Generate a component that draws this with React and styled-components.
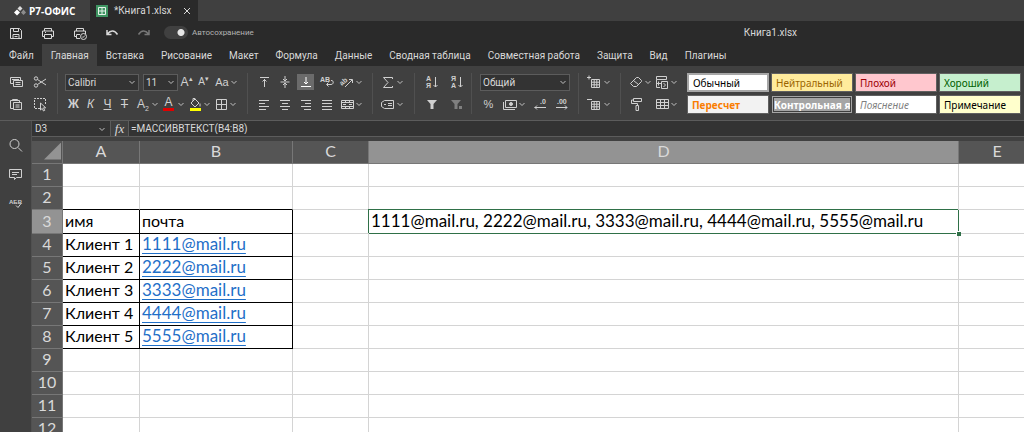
import React from 'react';
import styled, { createGlobalStyle, css } from 'styled-components';

const GlobalStyle = createGlobalStyle`
    * {
        box-sizing: border-box;
    }
    body {
        margin: 0;
        overflow: hidden;
        background: #404040;
        color: #d9d9d9;
        font-family: Roboto, "Liberation Sans", sans-serif;
        font-size: 10px;
    }
    button, input, select {
        margin: 0;
        padding: 0;
        border: 0;
        background: none;
        color: inherit;
        font: inherit;
    }
`;

const App = () => (
    <Page>
        <GlobalStyle />
        <WindowBar>
            <Brand>
                <Icon name="logo" w={12} h={10} />
                Р7-ОФИС
            </Brand>
            <FileTab>
                <Icon name="sheet" w={12} h={12} />
                <FileName>*Книга1.xlsx</FileName>
                <CloseButton aria-label="Закрыть">
                    <Icon name="close" w={8} h={8} />
                </CloseButton>
            </FileTab>
        </WindowBar>
        <QuickBar>
            <QuickButton aria-label="Сохранить"><Icon name="save" /></QuickButton>
            <QuickButton aria-label="Печать"><Icon name="print" /></QuickButton>
            <QuickButton aria-label="Быстрая печать"><Icon name="quickPrint" /></QuickButton>
            <QuickButton aria-label="Отменить"><Icon name="undo" /></QuickButton>
            <QuickButton aria-label="Повторить" $dim><Icon name="redo" /></QuickButton>
            <AutoSave>
                <Switch type="checkbox" role="switch" defaultChecked />
                Автосохранение
            </AutoSave>
            <DocTitle>Книга1.xlsx</DocTitle>
        </QuickBar>
        <Tabs>
            {tabs.map((tab) => (
                <Tab key={tab} $active={tab === 'Главная'}>{tab}</Tab>
            ))}
        </Tabs>
        <Ribbon />
        <Workspace>
            <Sidebar>
                <SideButton aria-label="Поиск"><Icon name="search" /></SideButton>
                <SideButton aria-label="Комментарии"><Icon name="comment" /></SideButton>
                <SideButton aria-label="Проверка орфографии"><Icon name="spell" /></SideButton>
            </Sidebar>
            <Editor>
                <FormulaBar>
                    <NameBox>
                        <NameInput aria-label="Имя ячейки" defaultValue="D3" />
                        <Chevron />
                    </NameBox>
                    <FxButton>fx</FxButton>
                    <FormulaInput aria-label="Формула" defaultValue="=МАССИВВТЕКСТ(B4:B8)" />
                </FormulaBar>
                <Sheet />
            </Editor>
        </Workspace>
    </Page>
);

const tabs = [
    'Файл', 'Главная', 'Вставка', 'Рисование', 'Макет', 'Формула', 'Данные',
    'Сводная таблица', 'Совместная работа', 'Защита', 'Вид', 'Плагины',
];

const Page = styled.div`
    display: flex;
    flex-direction: column;
    height: 100vh;
    overflow: hidden;
`;

const WindowBar = styled.header`
    display: flex;
    flex: none;
    height: 21px;
    background: #404040;
`;

const Brand = styled.div`
    display: flex;
    align-items: center;
    gap: 3px;
    width: 90px;
    padding-left: 14px;
    color: #fff;
    font-family: "Open Sans", sans-serif;
    font-size: 10px;
    font-weight: 700;
`;

const FileTab = styled.div`
    display: flex;
    align-items: center;
    width: 108px;
    padding: 0 6px;
    background: #2a2a2a;
`;

const FileName = styled.span`
    flex: 1;
    padding-left: 6px;
`;

const CloseButton = styled.button`
    display: flex;
    padding: 1px;
`;

const QuickBar = styled.div`
    display: flex;
    flex: none;
    align-items: center;
    height: 23px;
    background: #2a2a2a;
`;

const QuickButton = styled.button`
    display: flex;
    justify-content: center;
    width: 32px;
    color: ${({ $dim }) => ($dim ? '#777' : '#d9d9d9')};
`;

const AutoSave = styled.label`
    display: flex;
    align-items: center;
    gap: 4px;
    padding-left: 4px;
    color: #b3b3b3;
    font-size: 8px;
`;

const Switch = styled.input`
    appearance: none;
    width: 24px;
    height: 13px;
    margin: 0;
    border-radius: 7px;
    background: radial-gradient(circle at 17px 50%, #e6e6e6 3px, transparent 4px) #404040;
`;

const DocTitle = styled.div`
    flex: 1;
    padding-left: 490px;
    white-space: nowrap;
`;

const Tabs = styled.nav`
    display: flex;
    flex: none;
    height: 22px;
    background: #2a2a2a;
`;

const Tab = styled.button`
    padding: 0 8px 0 9px;
    background: ${({ $active }) => ($active ? '#404040' : 'transparent')};
    white-space: nowrap;
`;

// Ribbon

const RibbonBar = styled.div`
    display: flex;
    flex: none;
    padding: 7px 3px 6px 0;
    border-bottom: 1px solid #5c5c5c;
    background: #404040;
`;

const Group = styled.div`
    display: flex;
    flex-direction: column;
    gap: 4px;
    padding: 0 ${({ $right }) => $right}px 0 ${({ $left }) => $left}px;
    border-right: ${({ $last }) => ($last ? 0 : '1px solid #505050')};
`;

const Row = styled.div`
    display: flex;
    align-items: center;
    justify-content: ${({ $spread }) => ($spread ? 'space-between' : 'flex-start')};
    height: 18px;
`;

const Tool = styled.button`
    display: flex;
    flex: none;
    align-items: center;
    justify-content: center;
    width: ${({ $w }) => $w || 21}px;
    height: 18px;
    color: ${({ $dim }) => ($dim ? '#808080' : '#d0d0d0')};
    ${({ $on }) => $on && css`
        background: #6b6b6b;
        border: solid #404040;
        border-width: 1px 2px;
        color: #fff;
    `}
`;

const DropTool = styled(Tool)`
    width: 26px;
    justify-content: flex-end;
`;

const Glyph = styled.span`
    font-family: "Liberation Sans", sans-serif;
    font-size: ${({ $size }) => $size || 12}px;
    line-height: 16px;
    font-weight: ${({ $bold }) => ($bold ? 700 : 400)};
    font-style: ${({ $italic }) => ($italic ? 'italic' : 'normal')};
    text-decoration: ${({ $line }) => $line || 'none'};
    white-space: nowrap;

    sup, sub {
        font-size: 7px;
        line-height: 0;
    }
`;

const FontColor = styled.span`
    width: 11px;
    border-bottom: 3px solid #e00000;
    font-family: "Liberation Sans", sans-serif;
    font-size: 12px;
    line-height: 11px;
    text-align: center;
`;

const GlyphSlot = styled.span`
    width: 16px;
    text-align: center;
`;

const Combo = styled.label`
    display: flex;
    align-items: center;
    width: ${({ $w }) => $w}px;
    height: 17px;
    padding-right: 2px;
    border: 1px solid #5c5c5c;
    background: #333;
`;

const ComboSelect = styled.select`
    appearance: none;
    flex: 1;
    min-width: 0;
    padding-left: 2px;
`;

const Gallery = styled.div`
    display: grid;
    flex: 1;
    grid-template-columns: repeat(4, minmax(0, 1fr));
    gap: 3px 2px;
    padding-left: 9px;
`;

const StyleCell = styled.button`
    overflow: hidden;
    height: 19px;
    padding: 0 ${({ $tight }) => ($tight ? 0 : 4)}px;
    border: ${({ $edge }) => $edge || '1px solid #606060'};
    background: ${({ $bg }) => $bg || '#fff'};
    color: ${({ $color }) => $color || '#000'};
    font-family: "Noto Sans", sans-serif;
    font-size: 10px;
    line-height: 14px;
    font-weight: ${({ $bold }) => ($bold ? 700 : 400)};
    font-style: ${({ $italic }) => ($italic ? 'italic' : 'normal')};
    text-align: left;
    white-space: nowrap;
`;

const cellStyles = [
    { name: 'Обычный', edge: '2px solid #a6a6a6' },
    { name: 'Нейтральный', bg: '#ffeb9c', color: '#9c6500' },
    { name: 'Плохой', bg: '#ffc7ce', color: '#9c0006' },
    { name: 'Хороший', bg: '#c6efce', color: '#006100' },
    { name: 'Пересчет', bg: '#f2f2f2', color: '#fa7d00', bold: true },
    { name: 'Контрольная я', bg: '#a5a5a5', color: '#fff', bold: true, edge: '3px double #3f3f3f', tight: true },
    { name: 'Пояснение', color: '#7f7f7f', italic: true },
    { name: 'Примечание', bg: '#ffffcc' },
];

const Drop = ({ icon, label, children }) => (
    <DropTool aria-label={label}>
        {icon ? <Icon name={icon} /> : <GlyphSlot>{children}</GlyphSlot>}
        <Chevron />
    </DropTool>
);

const Ribbon = () => (
    <RibbonBar>
        <Group $left={4} $right={5}>
            <Row>
                <Tool $w={24} aria-label="Копировать"><Icon name="copy" /></Tool>
                <Tool $w={24} aria-label="Вырезать"><Icon name="cut" /></Tool>
            </Row>
            <Row>
                <Tool $w={24} aria-label="Вставить"><Icon name="paste" /></Tool>
                <Tool $w={24} aria-label="Выделить"><Icon name="select" /></Tool>
            </Row>
        </Group>
        <Group $left={7} $right={9}>
            <Row>
                <Combo $w={74}>
                    <ComboSelect aria-label="Шрифт"><option>Calibri</option></ComboSelect>
                    <Chevron />
                </Combo>
                <Gap />
                <Combo $w={35}>
                    <ComboSelect aria-label="Размер шрифта"><option>11</option></ComboSelect>
                    <Chevron />
                </Combo>
                <Tool $w={17} aria-label="Увеличить"><Glyph>A<sup>▴</sup></Glyph></Tool>
                <Tool $w={17} aria-label="Уменьшить"><Glyph $size={10}>A<sup>▾</sup></Glyph></Tool>
                <Drop label="Регистр"><Glyph $size={11}>Aa</Glyph></Drop>
            </Row>
            <Row>
                <Tool $w={17}><Glyph $bold>Ж</Glyph></Tool>
                <Tool $w={17}><Glyph $italic>К</Glyph></Tool>
                <Tool $w={17}><Glyph $line="underline">Ч</Glyph></Tool>
                <Tool $w={17}><Glyph $line="line-through">Т</Glyph></Tool>
                <Drop label="Индексы"><Glyph>A<sub>2</sub></Glyph></Drop>
                <DropTool aria-label="Цвет шрифта">
                    <FontColor>A</FontColor>
                    <Spacer />
                    <Chevron />
                </DropTool>
                <Drop icon="fill" label="Цвет заливки" />
                <Drop icon="borders" label="Границы" />
            </Row>
        </Group>
        <Group $left={5} $right={9}>
            <Row>
                <Tool aria-label="По верхнему краю"><Icon name="top" /></Tool>
                <Tool aria-label="По середине"><Icon name="middle" /></Tool>
                <Tool $on aria-label="По нижнему краю"><Icon name="bottom" /></Tool>
                <Tool aria-label="Перенос текста"><Icon name="wrap" /></Tool>
                <Drop icon="angle" label="Ориентация" />
            </Row>
            <Row>
                <Tool aria-label="По левому краю"><Icon name="left" /></Tool>
                <Tool aria-label="По центру"><Icon name="center" /></Tool>
                <Tool aria-label="По правому краю"><Icon name="right" /></Tool>
                <Tool aria-label="По ширине"><Icon name="justify" /></Tool>
                <Drop icon="merge" label="Объединить" />
            </Row>
        </Group>
        <Group $left={5} $right={10}>
            <Row><Drop icon="sum" label="Сумма" /></Row>
            <Row><Drop icon="named" label="Именованные диапазоны" /></Row>
        </Group>
        <Group $left={4} $right={2}>
            <Row>
                <Tool $w={25} aria-label="По возрастанию"><Icon name="sortAsc" /></Tool>
                <Tool $w={25} aria-label="По убыванию"><Icon name="sortDesc" /></Tool>
            </Row>
            <Row>
                <Tool $w={25} aria-label="Фильтр"><Icon name="filter" /></Tool>
                <Tool $w={25} $dim aria-label="Очистить фильтр"><Icon name="filterOff" /></Tool>
            </Row>
        </Group>
        <Group $left={8} $right={8}>
            <Row>
                <Combo $w={90}>
                    <ComboSelect aria-label="Числовой формат"><option>Общий</option></ComboSelect>
                    <Chevron />
                </Combo>
            </Row>
            <Row $spread>
                <Tool $w={17}><Glyph $size={11}>%</Glyph></Tool>
                <Drop icon="money" label="Денежный формат" />
                <Tool aria-label="Уменьшить разрядность"><Icon name="decLess" /></Tool>
                <Tool $w={17} aria-label="Увеличить разрядность"><Icon name="decMore" /></Tool>
            </Row>
        </Group>
        <Group $left={6} $right={9}>
            <Row><Drop icon="insertCells" label="Вставить ячейки" /></Row>
            <Row><Drop icon="deleteCells" label="Удалить ячейки" /></Row>
        </Group>
        <Group $left={5} $right={0} $last>
            <Row>
                <Drop icon="eraser" label="Очистить" />
                <Drop icon="condition" label="Условное форматирование" />
            </Row>
            <Row $spread>
                <Tool aria-label="Копировать стиль"><Icon name="painter" /></Tool>
                <Drop icon="table" label="Форматировать как таблицу" />
            </Row>
        </Group>
        <Gallery>
            {cellStyles.map(({ name, bg, color, bold, italic, edge, tight }) => (
                <StyleCell key={name} $bg={bg} $color={color} $bold={bold} $italic={italic} $edge={edge} $tight={tight}>
                    {name}
                </StyleCell>
            ))}
        </Gallery>
    </RibbonBar>
);

const Gap = styled.span`
    flex: none;
    width: 4px;
`;

const Spacer = styled.span`
    width: 3px;
`;

// Work area

const Workspace = styled.main`
    display: flex;
    flex: 1;
    min-height: 0;
`;

const Sidebar = styled.aside`
    display: flex;
    flex: none;
    flex-direction: column;
    gap: 13px;
    width: 32px;
    padding-top: 16px;
    border-right: 1px solid #505050;
    background: #404040;
`;

const SideButton = styled.button`
    display: flex;
    justify-content: center;
    height: 16px;
    color: #d0d0d0;
`;

const Editor = styled.section`
    flex: 1;
    min-width: 0;
    overflow: hidden;
`;

const FormulaBar = styled.div`
    display: flex;
    height: 16px;
    margin-bottom: 4px;
    border-bottom: 1px solid #5c5c5c;
    background: #333;
`;

const NameBox = styled.div`
    display: flex;
    align-items: center;
    width: 79px;
    padding: 0 4px 0 3px;
    border-right: 1px solid #5c5c5c;
`;

const NameInput = styled.input`
    flex: 1;
    min-width: 0;
`;

const FxButton = styled.button`
    width: 18px;
    border-right: 1px solid #5c5c5c;
    background: #404040;
    font-family: "Liberation Serif", serif;
    font-size: 13px;
    line-height: 13px;
    font-style: italic;
`;

const FormulaInput = styled.input`
    flex: 1;
    padding-left: 2px;
`;

const Grid = styled.table`
    width: 100%;
    min-width: 1004px;
    table-layout: fixed;
    border-collapse: separate;
    border-spacing: 0;
    background: #fff;
    color: #000;
    font-family: Lato, "Noto Sans", sans-serif;
    font-size: 16px;
    line-height: 20px;
`;

const Col = styled.col`
    width: ${({ $w }) => ($w ? `${$w}px` : 'auto')};
`;

const Head = styled.th`
    height: 23px;
    padding: 0 0 2px;
    border: solid #777;
    border-width: 0 1px 1px 0;
    background: ${({ $on }) => ($on ? '#939393' : '#555')};
    color: #d9d9d9;
    font-weight: 400;
    text-align: center;
`;

const CornerMark = styled.span`
    display: block;
    width: 17px;
    height: 17px;
    margin-left: 12px;
    background: #939393;
    clip-path: polygon(100% 0, 100% 100%, 0 100%);
`;

const Cell = styled.td`
    position: relative;
    height: ${({ $on }) => ($on ? 24 : 23)}px;
    padding: 0 0 2px 2px;
    border: solid #d4d4d4;
    border-width: 0 1px 1px 0;
    white-space: nowrap;
    ${({ $boxed }) => $boxed && css`
        border-color: #000;
    `}
    ${({ $over }) => $over && css`
        border-bottom-color: #000;
    `}
    ${({ $on }) => $on && css`
        border-color: #2f7048;
        box-shadow: -1px -1px 0 #2f7048;
        font-size: 17px;
    `}
`;

const FillHandle = styled.span`
    position: absolute;
    right: -3px;
    bottom: -3px;
    z-index: 1;
    width: 5px;
    height: 5px;
    border: solid #fff;
    border-width: 1px 0 0 1px;
    background: #2f7048;
`;

const MailLink = styled.a`
    color: #1f6fc8;
    font-size: 17px;
    text-decoration: underline;
    text-decoration-thickness: 1px;
    text-underline-offset: 3px;
`;

const columns = ['A', 'B', 'C', 'D', 'E'];

const cells = {
    A3: 'имя', B3: 'почта',
    A4: 'Клиент 1', B4: '1111@mail.ru',
    A5: 'Клиент 2', B5: '2222@mail.ru',
    A6: 'Клиент 3', B6: '3333@mail.ru',
    A7: 'Клиент 4', B7: '4444@mail.ru',
    A8: 'Клиент 5', B8: '5555@mail.ru',
    D3: '1111@mail.ru, 2222@mail.ru, 3333@mail.ru, 4444@mail.ru, 5555@mail.ru',
};

const selected = 'D3';

const Sheet = () => (
    <Grid>
        <colgroup>
            <Col $w={31} />
            <Col $w={77} />
            <Col $w={153} />
            <Col $w={76} />
            <Col $w={590} />
            <Col />
        </colgroup>
        <thead>
            <tr>
                <Head aria-label="Выделить всё"><CornerMark /></Head>
                {columns.map((c) => <Head key={c} scope="col" $on={c === selected[0]}>{c}</Head>)}
            </tr>
        </thead>
        <tbody>
            {Array.from({ length: 12 }, (_, i) => i + 1).map((row) => (
                <tr key={row}>
                    <Head scope="row" $on={row === 3}>{row}</Head>
                    {columns.map((c) => {
                        const id = c + row;
                        const text = cells[id];
                        const inTable = c === 'A' || c === 'B';
                        return (
                            <Cell
                                key={id}
                                $on={id === selected}
                                $boxed={text && inTable}
                                $over={inTable && row === 2}
                            >
                                {c === 'B' && row > 3 && text
                                    ? <MailLink href={`mailto:${text}`}>{text}</MailLink>
                                    : text}
                                {id === selected && <FillHandle />}
                            </Cell>
                        );
                    })}
                </tr>
            ))}
        </tbody>
    </Grid>
);

// Icons

const Svg = styled.svg`
    display: block;
    flex: none;
    overflow: visible;
`;

const SvgText = styled.text`
    fill: currentColor;
    stroke: none;
    font-family: "Liberation Sans", sans-serif;
    font-size: ${({ $size }) => $size || 7}px;
    font-weight: 700;
`;

const Icon = ({ name, w = 16, h = 16 }) => (
    <Svg width={w} height={h} viewBox={`0 0 ${w} ${h}`} fill="none" stroke="currentColor" aria-hidden="true">
        {icons[name]}
    </Svg>
);

const Chevron = () => (
    <Svg width="8" height="8" viewBox="0 0 8 8" fill="none" stroke="#c0c0c0" aria-hidden="true">
        <path d="M1.500 3L4 5.500 6.500 3" />
    </Svg>
);

const gridLines = 'M4.5 5.5h8v8h-8zM4.5 8.2h8M4.5 10.8h8M7.2 5.5v8M9.8 5.5v8';

const icons = {
    logo: (
        <g stroke="none">
            <path d="M3 3.500l3 3-3 3-3-3z" fill="#fff" />
            <path d="M6 0l2.500 2.500L6 5 3.500 2.500z" fill="#ddd" />
            <path d="M9.500 3.500L12 6.500 9.500 9 7 6.500z" fill="#8c8c8c" />
        </g>
    ),
    sheet: (
        <>
            <rect width="12" height="12" fill="#3f9562" stroke="none" />
            <path d="M2.500 2.500h7v7h-7zM6 2.500v7M2.500 6h7" stroke="#e6f2ea" />
        </>
    ),
    close: <path d="M1 1l6 6M7 1L1 7" />,
    save: <path d="M2.500 3.500h9l2 2v8h-11zM5.500 3.500v3h5v-3M5 13.500v-4h6v4M6.500 11.500h3" />,
    print: <path d="M4.500 6V3.500h7V6M4 11.500H2.500v-5.500h11v5.500H12M4.500 9.500h7v4h-7zM5 7.500h1" />,
    quickPrint: (
        <>
            <path d="M4.500 6V3.500h7V6M4 11.500H2.500v-5.500h11v3M8 9.500H4.500v4H8" />
            <circle cx="11.500" cy="11.500" r="3" />
            <path d="M10 11.500l1 1 2-2" />
        </>
    ),
    undo: <path d="M3 5v4.500h4.500M3.500 9c3-4 7-4 10 .5" strokeWidth="1.500" />,
    redo: <path d="M13 5v4.500H8.500M12.500 9c-3-4-7-4-10 .5" strokeWidth="1.500" />,
    search: (
        <>
            <circle cx="6.500" cy="7" r="4.500" />
            <path d="M10 10.500l4 4" />
        </>
    ),
    comment: <path d="M1.500 3.500h12v8h-5l-2 2v-2h-5zM4 6.500h7M4 8.500h5" />,
    spell: (
        <>
            <SvgText x="1" y="9" $size={6}>АБВ</SvgText>
            <path d="M8 10.500l2 2 3-4" />
        </>
    ),
    copy: <path d="M12.500 6V3.500h-10v6H5M4 5.500h7M5.500 6.500h9v6h-9zM7.500 8.500h5M7.500 10.500h5" />,
    cut: (
        <>
            <circle cx="4" cy="4.500" r="1.700" />
            <circle cx="4" cy="11.500" r="1.700" />
            <path d="M5.500 5.500L14 11M5.500 10.500L14 5" />
        </>
    ),
    paste: <path d="M5 12.500H2.500v-8h9V6M4.500 4.500v-1h5v1M5.500 6.500h8v7h-8zM7.500 9h4M7.500 11h4" />,
    select: (
        <>
            <path d="M8 12.500H2.500v-10h11V8" strokeDasharray="2 1" />
            <path d="M8.500 7v7l1.700-1.600 1.300 2.600 1.200-.6-1.200-2.600h2.200z" fill="#404040" />
        </>
    ),
    fill: (
        <>
            <path d="M4 7l4-4 4 4-4 4zM6 5V2.500h2V4M13 7.500v3" />
            <path d="M3 12h11v3H3z" fill="#ff0" stroke="none" />
        </>
    ),
    borders: <path d="M3.500 3.500h10v10h-10zM8.500 3.500v10M3.500 8.500h10" />,
    top: <path d="M4 3.500h9M8.500 13V5M6.500 7.500l2-2 2 2" />,
    middle: <path d="M3.500 8h9M8 2v5M6 5l2 2 2-2M8 14V9M6 11l2-2 2 2" />,
    bottom: <path d="M3 12.500h10M8 3v7M6 8l2 2 2-2" />,
    wrap: (
        <>
            <SvgText x="1" y="8">AB</SvgText>
            <path d="M12 6.500c3-.5 3 4 0 4H8M9.500 8.500l-2 2 2 2" />
        </>
    ),
    angle: (
        <>
            <SvgText x="1" y="9" transform="rotate(-40 6 8)">ab</SvgText>
            <path d="M6 13l7-7M10 5.500h3.500V9" />
        </>
    ),
    left: <path d="M3 4.500h10M3 7.500h6M3 10.500h10M3 13.500h7" />,
    center: <path d="M3 4.500h10M5 7.500h6M3 10.500h10M5 13.500h6" />,
    right: <path d="M3 4.500h10M7 7.500h6M3 10.500h10M6 13.500h7" />,
    justify: <path d="M3 4.500h10M3 7.500h10M3 10.500h10M3 13.500h10" />,
    merge: <path d="M2.500 4.500h12v8h-12zM2.500 6.500h12M2.500 10.500h12M6.500 4v2M10.500 4v2M6.500 11v2M10.500 11v2M4 8.500h3M10 8.500h3" />,
    sum: <path d="M12.500 5V3.500h-9L8 8.500l-4.500 5h9V12" />,
    named: <path d="M4.500 4.500h9v8h-9l-3-2v-4zM8 7.500h4M8 9.500h4M4 8.500h2" />,
    sortAsc: (
        <>
            <SvgText x="2" y="7">А</SvgText>
            <SvgText x="2" y="14">Я</SvgText>
            <path d="M11.500 3v10M9.500 11l2 2 2-2" />
        </>
    ),
    sortDesc: (
        <>
            <SvgText x="2" y="7">Я</SvgText>
            <SvgText x="2" y="14">А</SvgText>
            <path d="M11.500 3v10M9.500 11l2 2 2-2" />
        </>
    ),
    filter: <path d="M3 4h10L9.500 8v5h-3V8z" fill="currentColor" stroke="none" />,
    filterOff: <path d="M2 4h10L8.500 8v5h-3V8zM10 10h3v3h-3z" fill="currentColor" stroke="none" />,
    money: (
        <>
            <path d="M3.500 4.500h11v7h-11zM1.500 6v7.500H13" />
            <circle cx="9" cy="8" r="1.500" fill="currentColor" />
        </>
    ),
    decLess: (
        <>
            <SvgText x="8" y="8">.0</SvgText>
            <path d="M2.500 11.500H14M5 9.500l-2 2 2 2" />
        </>
    ),
    decMore: (
        <>
            <SvgText x="3" y="8">.00</SvgText>
            <path d="M2 11.500h11M11 9.500l2 2-2 2" />
        </>
    ),
    insertCells: <path d={`${gridLines}M0 3.500h4M2 1.500v4`} />,
    deleteCells: <path d={`${gridLines}M0 3.500h5`} />,
    eraser: <path d="M2.500 9.500l6-6h2l3 3v1l-5 5h-3zM5.500 6.500l5 4" />,
    condition: <path d="M2.500 2.500h10v3h-10zM2.500 5.500v8H6M4.500 7.500v4M7.500 7.500h6v7h-6zM9.500 9l2 2-2 2M2.500 9.500H7" />,
    painter: <path d="M4.500 2.500h8v3h-8zM4.500 4h-2v3.500h6V9M7 9.500h2.500v5H7z" />,
    table: <path d="M2.500 3.500h12v9h-12zM2.500 6.500h12M2.500 9.500h12M6.500 3.500v9M10.500 3.500v9" />,
};

export default App;
